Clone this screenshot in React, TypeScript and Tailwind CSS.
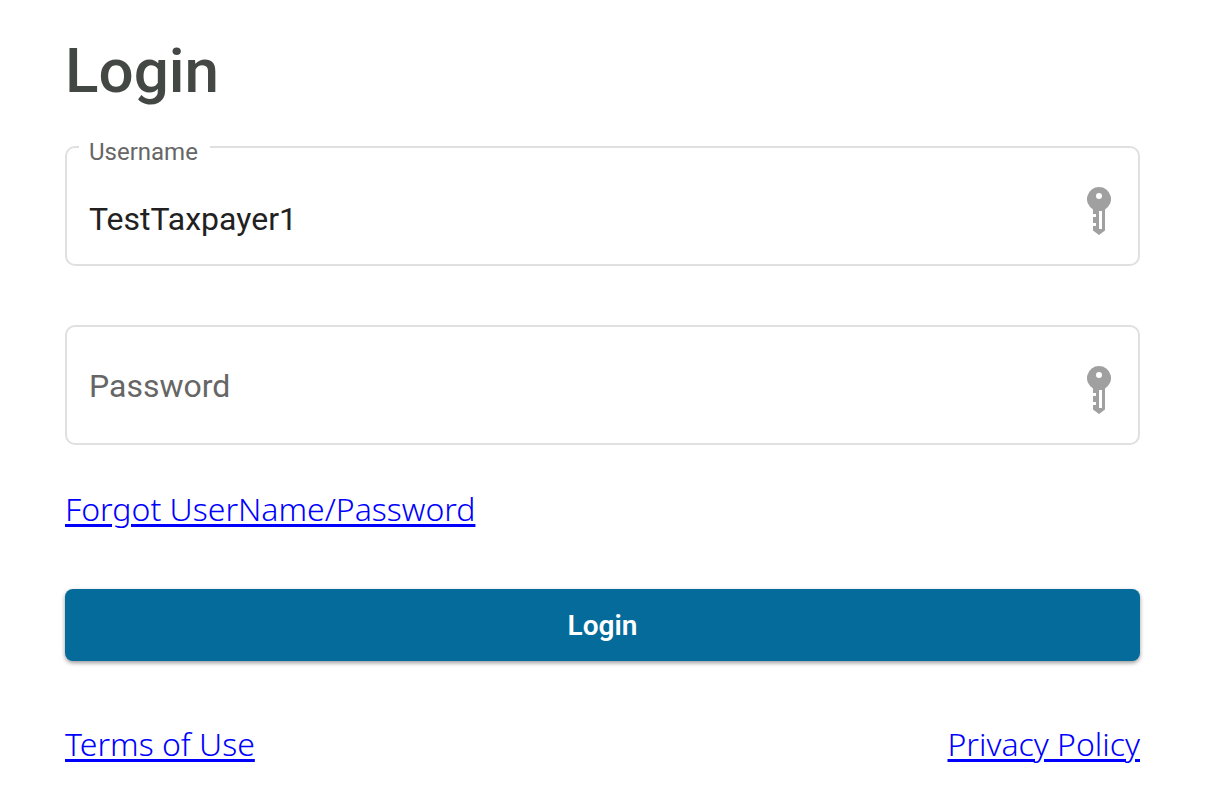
import { useState } from "react";

const KeyIcon = () => {
  return (
    <svg
      viewBox="0 0 24 48"
      className="h-12 w-6 shrink-0 fill-[#a0a0a0]"
      aria-hidden="true"
    >
      <path
        fillRule="evenodd"
        d="M12 0a12 12 0 0 1 6 22.4V43.5L12 48l-6-4.5V39h3v-3H6v-6h3v-3H6v-4.6A12 12 0 0 1 12 0ZM12 6a3 3 0 1 0 0 6 3 3 0 0 0 0-6ZM12 24v18h3V24Z"
      />
    </svg>
  );
};

const FooterLink = (props: { text: string }) => {
  return (
    <a
      href="#"
      className="font-['Noto_Sans',sans-serif] text-[32px] leading-10 font-light text-[#0000ff] underline decoration-[3px] underline-offset-3"
    >
      {props.text}
    </a>
  );
};

export default function App() {
  const [username, setUsername] = useState("TestTaxpayer1");
  const [password, setPassword] = useState("");

  return (
    <main className="min-h-screen bg-white pt-[35px] pr-[84px] pb-6 pl-[65px] font-[Roboto,sans-serif]">
      <h1 className="text-[62px] leading-[72px] font-medium text-[#444844]">
        Login
      </h1>
      <form className="mt-[23px]" onSubmit={(e) => e.preventDefault()}>
        <fieldset className="rounded-[10px] border-2 border-[#e0e0e0] pr-[27px] pl-3">
          <legend className="pt-2.5 pr-3 pl-2.5 text-2xl leading-6 text-[#666666]">
            <label htmlFor="username">Username</label>
          </legend>
          <div className="flex h-[100px] items-center pb-1.5">
            <input
              id="username"
              type="text"
              value={username}
              onChange={(e) => setUsername(e.target.value)}
              className="h-full min-w-0 flex-1 px-2.5 pt-4 text-[32px] text-[#212121] outline-none"
            />
            <KeyIcon />
          </div>
        </fieldset>

        <div className="mt-[59px] flex h-[120px] items-center rounded-[10px] border-2 border-[#e0e0e0] pt-2.5 pr-[27px] pl-3">
          <input
            type="password"
            aria-label="Password"
            placeholder="Password"
            value={password}
            onChange={(e) => setPassword(e.target.value)}
            className="h-full min-w-0 flex-1 px-2.5 pb-2 text-[32px] text-[#212121] outline-none placeholder:text-[#666666]"
          />
          <KeyIcon />
        </div>

        <div className="mt-11 flex">
          <FooterLink text="Forgot UserName/Password" />
        </div>

        <button
          type="submit"
          className="mt-[60px] h-[72px] w-full rounded-lg bg-[#046b9a] pt-0.5 text-[28px] font-semibold text-white shadow-[0_2px_4px_rgba(0,0,0,0.4)]"
        >
          Login
        </button>
      </form>

      <div className="mt-[63px] flex justify-between">
        <FooterLink text="Terms of Use" />
        <FooterLink text="Privacy Policy" />
      </div>
    </main>
  );
}
